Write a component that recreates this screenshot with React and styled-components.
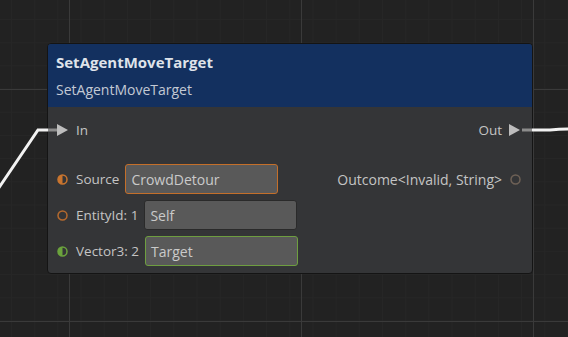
import React from "react";
import styled, { createGlobalStyle } from "styled-components";

const GlobalStyle = createGlobalStyle`
  html, body {
    margin: 0;
    padding: 0;
    background: #222222;
  }
  body {
    font-family: "Open Sans", "Noto Sans", sans-serif;
  }
`;

const Canvas = styled.div`
  position: relative;
  width: 568px;
  height: 337px;
  overflow: hidden;
  background-color: #222222;
  background-image:
    linear-gradient(to right, #3a3a3a 1px, transparent 1px),
    linear-gradient(to bottom, #3a3a3a 1px, transparent 1px),
    linear-gradient(to right, #262626 1px, transparent 1px),
    linear-gradient(to bottom, #262626 1px, transparent 1px);
  background-size: 232px 232px, 232px 232px, 23.2px 23.2px, 23.2px 23.2px;
  background-position: 69px 0, 0 89px, 11px 0, 0 19px;
`;

const Node = styled.div`
  position: absolute;
  left: 47px;
  top: 43px;
  width: 484px;
  height: 229px;
  border: 1px solid #141414;
  border-radius: 4px;
  background: #343537;
  overflow: hidden;
  display: flex;
  flex-direction: column;
`;

const Header = styled.div`
  height: 63px;
  background: #13305f;
  padding: 0 8px;
  display: flex;
  flex-direction: column;
  justify-content: center;
  gap: 10px;
`;

const Title = styled.div`
  font-size: 15px;
  font-weight: 700;
  color: #dfe3ea;
  line-height: 18px;
`;

const Subtitle = styled.div`
  font-size: 14px;
  color: #c3c9d4;
  line-height: 18px;
`;

const Body = styled.div`
  flex: 1;
  display: flex;
  justify-content: space-between;
  padding: 13px 11px 7px 9px;
`;

const Column = styled.div`
  display: flex;
  flex-direction: column;
  align-items: ${(p) => (p.$right ? "flex-end" : "flex-start")};
  gap: 6px;
`;

const ExecRow = styled.div`
  display: flex;
  align-items: center;
  gap: 7px;
  height: 20px;
  margin-bottom: 18px;
  font-size: 13.5px;
  color: #c4c4c4;
`;

const DataRow = styled.div`
  display: flex;
  align-items: center;
  height: 30px;
  font-size: 13.5px;
  color: #c4c4c4;
`;

const Label = styled.span`
  margin: 0 6px 0 8px;
  white-space: nowrap;
`;

const OutLabel = styled.span`
  margin-right: 8px;
  font-size: 14px;
  white-space: nowrap;
`;

const Field = styled.div`
  width: ${(p) => p.$width}px;
  height: 30px;
  box-sizing: border-box;
  border: 1px solid ${(p) => p.$border};
  border-radius: 3px;
  background: #595959;
  padding: 0 5px;
  display: flex;
  align-items: center;
  font-size: 14px;
  color: #cacaca;
`;

const Arrow = () => (
  <svg width="12" height="12" viewBox="0 0 12 12">
    <polygon points="0,0 0,12 11,6" fill="#bdbdbd" />
  </svg>
);

const Pin = ({ color, half }) => (
  <svg width="11" height="11" viewBox="0 0 11 11">
    <circle cx="5.5" cy="5.5" r="4.5" fill="none" stroke={color} strokeWidth="1.5" />
    {half && <path d="M5.5 1 A4.5 4.5 0 0 0 5.5 10 Z" fill={color} />}
  </svg>
);

const Wires = styled.svg`
  position: absolute;
  left: 0;
  top: 0;
  pointer-events: none;
`;

const inputs = [
  { label: "Source", value: "CrowdDetour", color: "#c9752f", half: true, border: "#c46f2a", width: 153 },
  { label: "EntityId: 1", value: "Self", color: "#b56a2e", half: false, border: "#2a2a2a", width: 153 },
  { label: "Vector3: 2", value: "Target", color: "#6ba33d", half: true, border: "#6e9e40", width: 153 },
];

export default function App() {
  return (
    <>
      <GlobalStyle />
      <Canvas>
        <Node>
          <Header>
            <Title>SetAgentMoveTarget</Title>
            <Subtitle>SetAgentMoveTarget</Subtitle>
          </Header>
          <Body>
            <Column>
              <ExecRow>
                <Arrow />
                <span>In</span>
              </ExecRow>
              {inputs.map((item) => (
                <DataRow key={item.label}>
                  <Pin color={item.color} half={item.half} />
                  <Label>{item.label}</Label>
                  <Field $border={item.border} $width={item.width}>
                    {item.value}
                  </Field>
                </DataRow>
              ))}
            </Column>
            <Column $right>
              <ExecRow>
                <span>Out</span>
                <Arrow />
              </ExecRow>
              <DataRow>
                <OutLabel>Outcome&lt;Invalid, String&gt;</OutLabel>
                <Pin color="#6e6156" />
              </DataRow>
            </Column>
          </Body>
        </Node>
        <Wires width="568" height="337">
          <polyline points="-2,189 38,130 48,130" fill="none" stroke="#f2f2f2" strokeWidth="3" />
          <line x1="48" y1="130" x2="57" y2="130" stroke="#8c8c8c" strokeWidth="3" />
          <line x1="522" y1="130" x2="532" y2="130" stroke="#8c8c8c" strokeWidth="3" />
          <path d="M532 130 L550 130 Q560 129 570 129" fill="none" stroke="#f2f2f2" strokeWidth="3" />
        </Wires>
      </Canvas>
    </>
  );
}
